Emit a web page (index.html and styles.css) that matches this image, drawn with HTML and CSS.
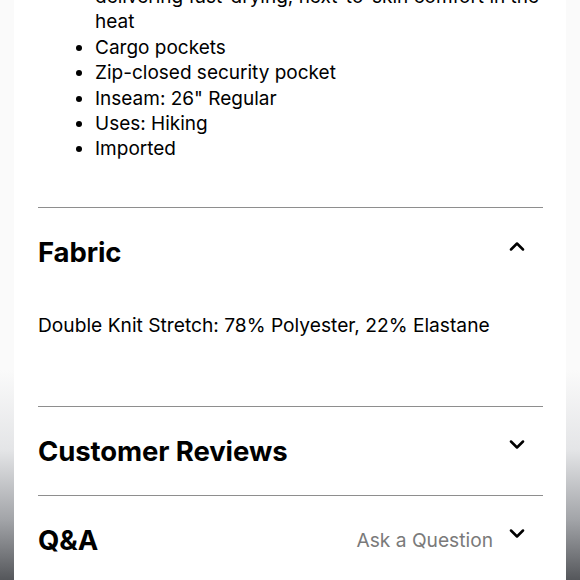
FILE: index.html
```html
<!DOCTYPE html>
<html lang="en">
<head>
<meta charset="utf-8">
<title>Product details</title>
<link rel="stylesheet" href="styles.css">
</head>
<body>
<div class="page">
  <ul class="features">
    <li>delivering fast-drying, next-to-skin comfort in the<br>heat</li>
    <li>Cargo pockets</li>
    <li>Zip-closed security pocket</li>
    <li>Inseam: 26" Regular</li>
    <li>Uses: Hiking</li>
    <li>Imported</li>
  </ul>

  <section class="acc acc-open">
    <div class="acc-head">
      <h2 class="acc-title">Fabric</h2>
      <span class="chev"><svg width="16" height="10" viewBox="0 0 16 10"><polyline points="2,8.5 8,2.5 14,8.5" fill="none" stroke="#000" stroke-width="2.5" stroke-linecap="round" stroke-linejoin="round"/></svg></span>
    </div>
    <p class="acc-body">Double Knit Stretch: 78% Polyester, 22% Elastane</p>
  </section>

  <section class="acc">
    <div class="acc-head">
      <h2 class="acc-title">Customer Reviews</h2>
      <span class="chev"><svg width="16" height="10" viewBox="0 0 16 10"><polyline points="2,1.5 8,7.5 14,1.5" fill="none" stroke="#000" stroke-width="2.5" stroke-linecap="round" stroke-linejoin="round"/></svg></span>
    </div>
  </section>

  <section class="acc">
    <div class="acc-head">
      <h2 class="acc-title">Q&amp;A</h2>
      <span class="acc-link">Ask a Question</span>
      <span class="chev"><svg width="16" height="10" viewBox="0 0 16 10"><polyline points="2,1.5 8,7.5 14,1.5" fill="none" stroke="#000" stroke-width="2.5" stroke-linecap="round" stroke-linejoin="round"/></svg></span>
    </div>
  </section>
</div>
</body>
</html>
```

FILE: styles.css
```css
html, body {
  margin: 0;
  padding: 0;
  height: 580px;
  overflow: hidden;
}
body {
  background: linear-gradient(to bottom, #fafafa 0, #fafafa 370px, #e4e5e7 450px, #a2a4a8 520px, #55575b 580px);
  font-family: "Inter", "Noto Sans", sans-serif;
  color: #000;
}
.page {
  margin: 0 14px;
  height: 580px;
  background: #fff;
  padding: 0 23px 0 24px;
  overflow: hidden;
}
.features {
  margin: -16px 0 0;
  padding: 0 0 0 57px;
  font-size: 19px;
  line-height: 25.4px;
  list-style: disc;
}
.acc {
  border-top: 1px solid #8e8e8e;
}
.features + .acc {
  margin-top: 45px;
}
.acc-head {
  display: flex;
  align-items: center;
  padding: 28px 0;
}
.acc-title {
  margin: 0;
  flex: 1;
  font-size: 27.5px;
  line-height: 32px;
  font-weight: 700;
  letter-spacing: -0.1px;
}
.chev {
  display: flex;
  margin: 0 18px 12px 0;
}
.acc-link {
  font-size: 19.2px;
  color: #7a7a7a;
  margin-right: 16px;
}
.acc-body {
  margin: 17px 0 0;
  padding-bottom: 68px;
  font-size: 19.2px;
  line-height: 25px;
}
```
